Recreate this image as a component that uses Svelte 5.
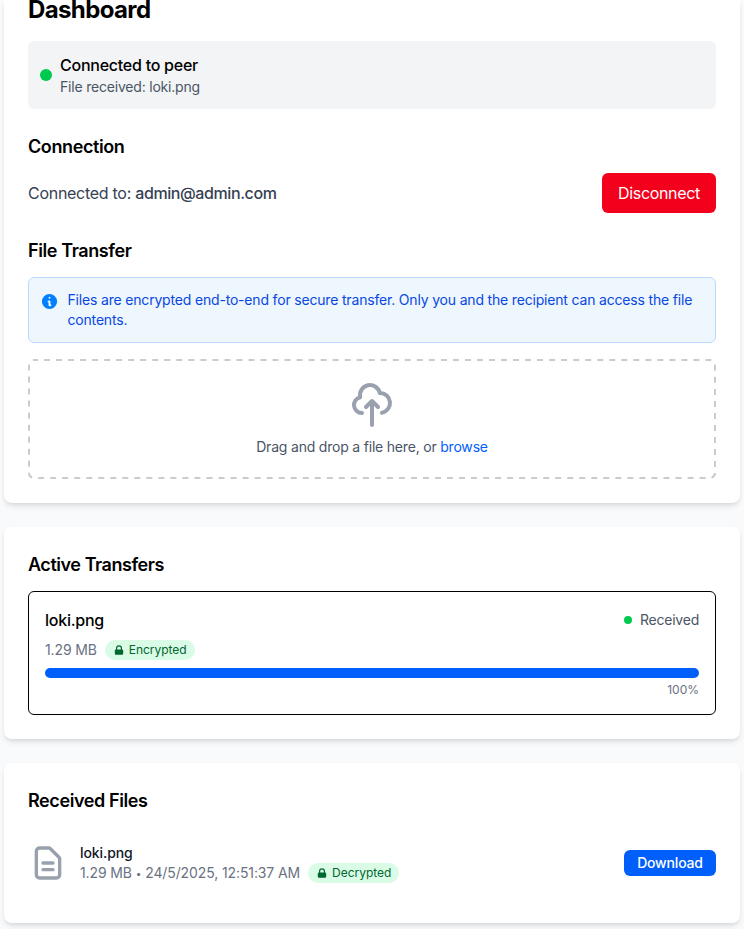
<script>
  const name = 'loki.png';
</script>

<main>
  <section class="card first">
    <h1>Dashboard</h1>
    <div class="status">
      <i class="dot"></i>
      <div><p class="strong title">Connected to peer</p><p class="sub">File received: {name}</p></div>
    </div>
    <h2>Connection</h2>
    <div class="conn">
      <p>Connected to: <b>admin@admin.com</b></p>
      <button class="red">Disconnect</button>
    </div>
    <h2>File Transfer</h2>
    <div class="info">
      <svg width="19" height="19" viewBox="0 0 20 20" fill="#0080ff"><path fill-rule="evenodd" clip-rule="evenodd" d="M18 10a8 8 0 11-16 0 8 8 0 0116 0zm-7-4a1 1 0 11-2 0 1 1 0 012 0zM9 9a1 1 0 000 2v3a1 1 0 001 1h1a1 1 0 100-2v-3a1 1 0 00-1-1H9z" /></svg>
      <p>Files are encrypted end-to-end for secure transfer. Only you and the recipient can access the file contents.</p>
    </div>
    <div class="drop">
      <svg class="outline" width="688" height="120" fill="none" stroke="#cbcbcb" stroke-width="2"><rect x="1" y="1" width="686" height="118" rx="5" stroke-dasharray="6 6.026" stroke-dashoffset="2" /></svg>
      <svg width="48" height="48" viewBox="0 0 24 24" fill="none" stroke="#99a1af" stroke-width="2" stroke-linecap="round" stroke-linejoin="round"><path d="M7 16a4 4 0 01-.88-7.903A5 5 0 1115.9 6L16 6a5 5 0 011 9.9M15 13l-3-3m0 0l-3 3m3-3v12" /></svg>
      <p>Drag and drop a file here, or <span>browse</span></p>
    </div>
  </section>

  <section class="card">
    <h2 class="active">Active Transfers</h2>
    <div class="transfer">
      <div class="row"><p class="strong">{name}</p><p class="state"><i class="dot small"></i>Received</p></div>
      <div class="meta">
        <span>1.29 MB</span>
        {@render badge('Encrypted')}
      </div>
      <div class="bar"></div>
      <p class="pct">100%</p>
    </div>
  </section>

  <section class="card last">
    <h2>Received Files</h2>
    <div class="file">
      <svg width="40" height="40" viewBox="0 0 24 24" fill="none" stroke="#99a1af" stroke-width="2" stroke-linecap="round" stroke-linejoin="round"><path d="M9 12h6m-6 4h6m2 5H7a2 2 0 01-2-2V5a2 2 0 012-2h5.586a1 1 0 01.707.293l5.414 5.414a1 1 0 01.293.707V19a2 2 0 01-2 2z" /></svg>
      <div class="details">
        <p class="fname">{name}</p>
        <div class="meta"><span>1.29 MB <span class="bullet">•</span> 24/5/2025, 12:51:37 AM</span>{@render badge('Decrypted')}</div>
      </div>
      <button class="blue">Download</button>
    </div>
  </section>
</main>

{#snippet badge(text)}
  <span class="badge"><svg width="12" height="12" viewBox="0 0 20 20" fill="currentColor"><path fill-rule="evenodd" clip-rule="evenodd" d="M5 9V7a5 5 0 0110 0v2a2 2 0 012 2v5a2 2 0 01-2 2H5a2 2 0 01-2-2v-5a2 2 0 012-2zm8-2v2H7V7a3 3 0 016 0z" /></svg>{text}</span>
{/snippet}

<style>
  :global(body) { background: #f9fafb; overflow: hidden; }
  main { height: 929px; overflow: hidden; padding: 0 4px; box-sizing: border-box; font: 16px/24px Inter, sans-serif; color: #000; }
  main * { box-sizing: border-box; }
  h1, h2, p { margin: 0; }
  h1 { font-size: 24px; line-height: 32px; font-weight: 700; margin: -6px 0 15px; letter-spacing: -.62px; }
  h2 { font-size: 18px; line-height: 28px; font-weight: 600; letter-spacing: -.4px; }
  .active { letter-spacing: -.45px; }
  .card { background: #fff; border-radius: 8px; padding: 24px; margin-bottom: 24px; box-shadow: 0 4px 6px -1px #0000001a, 0 2px 4px -2px #0000001a; }
  .first { height: 503px; padding-top: 0; border-radius: 0 0 8px 8px; display: flow-root; }
  .card:nth-child(2) { height: 212px; }
  .last { height: 160px; }
  .dot { width: 12px; height: 12px; border-radius: 50%; background: #00c950; }
  .small { width: 8px; height: 8px; }
  .strong { font-weight: 500; letter-spacing: -.25px; }
  .status { height: 68px; background: #f3f4f6; border-radius: 6px; padding: 12px; display: flex; align-items: center; gap: 8px; margin-bottom: 24px; }
  .sub { font-size: 14px; line-height: 20px; color: #4a5565; letter-spacing: -.2px; }
  .conn { display: flex; align-items: center; justify-content: space-between; margin: 12px 0 24px; color: #364153; letter-spacing: -.28px; }
  .conn b { font-weight: 500; letter-spacing: -.41px; }
  button { border: 0; font: 16px/24px Inter, sans-serif; color: #fff; border-radius: 6px; }
  .red { background: #f3001d; width: 114px; height: 40px; padding: 0; letter-spacing: -.33px; }
  .info { display: flex; gap: 8.5px; margin: 12px 0 16px; height: 66px; border: 1px solid #b9dafe; background: #eef6fe; border-radius: 6px; padding: 12px 12px 12px 11px; color: #0848e2; font-size: 14px; line-height: 20px; letter-spacing: -.18px; }
  .info svg { flex: none; margin-top: 2px; }
  .drop { position: relative; height: 120px; border-radius: 6px; display: flex; flex-direction: column; align-items: center; padding-top: 22px; font-size: 14px; line-height: 20px; color: #4a5565; gap: 8px; letter-spacing: -.2px; }
  .outline { position: absolute; top: 0; left: 0; }
  .drop span { color: #0060fb; }
  .transfer { margin-top: 12px; height: 124px; border: 1px solid #000; border-radius: 6px; padding: 16px; }
  .row { display: flex; justify-content: space-between; align-items: center; }
  .state { display: flex; align-items: center; gap: 8px; font-size: 14px; line-height: 20px; color: #4a5565; letter-spacing: -.23px; }
  .meta { display: flex; align-items: center; gap: 8px; font-size: 14px; line-height: 20px; color: #6a7282; letter-spacing: -.13px; }
  .details .meta { letter-spacing: -.11px; }
  .bullet { font-size: 10px; line-height: 1; letter-spacing: 0; vertical-align: 1px; }
  .transfer .meta { margin: 8px 0; }
  .badge { display: inline-flex; align-items: center; gap: 4px; height: 20px; padding: 0 8px; border-radius: 10px; background: #dafce7; color: #016630; font-size: 12px; line-height: 16px; letter-spacing: -.03px; }
  .bar { height: 10px; background: #005ffb; border-radius: 5px; }
  .pct { font-size: 12px; line-height: 16px; text-align: right; color: #6a7282; margin-top: 4px; }
  .file { display: flex; align-items: center; margin-top: 12px; padding: 16px 0; }
  .details { margin-left: 12px; flex: 1; }
  .fname { font-size: 14px; line-height: 20px; font-weight: 500; color: #101828; letter-spacing: -.08px; }
  .blue { background: #005ffb; width: 92px; height: 26px; padding: 0; font-size: 14px; line-height: 20px; font-weight: 500; letter-spacing: -.17px; }
</style>
